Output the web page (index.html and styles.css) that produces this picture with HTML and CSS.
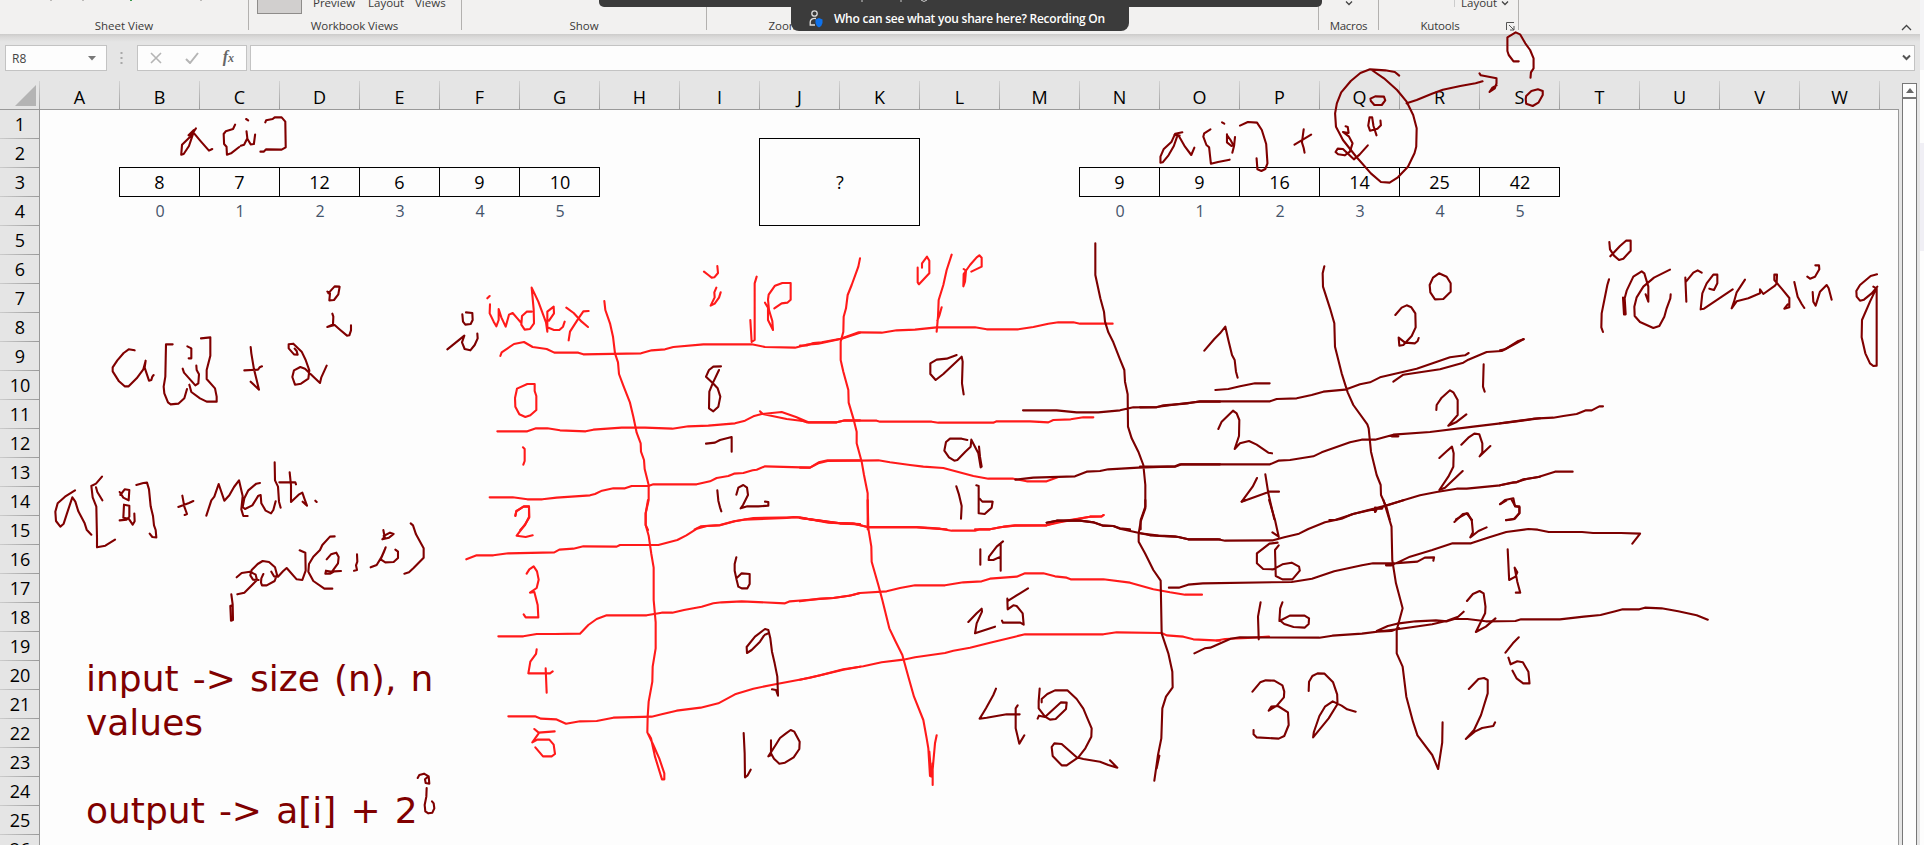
FILE: index.html
```
<!DOCTYPE html>
<html lang="en">
<head>
<meta charset="utf-8">
<title>Worksheet</title>
<link rel="stylesheet" href="styles.css">
</head>
<body>
<div class="app">
  <header class="ribbon">
    <section class="group g-sheet"><div class="tools"><i></i><i></i><i class="green"></i><i></i></div><span class="label">Sheet View</span></section>
    <section class="group g-views"><div class="tools"><b class="view-btn"></b><span class="w-preview">Preview</span><span class="w-layout">Layout</span><span>Views</span></div><span class="label">Workbook Views</span></section>
    <section class="group g-show"><span class="label">Show</span></section>
    <section class="group g-zoom"><span class="label">Zoom</span></section>
    <section class="group g-window"></section>
    <section class="group g-macros"><svg class="chev" width="8" height="5"><path d="M1 0.5 4 3.5 7 0.5"/></svg><span class="label">Macros</span></section>
    <section class="group g-kutools"><div class="tools"><span>Layout</span><svg class="chev" width="8" height="5"><path d="M1 0.5 4 3.5 7 0.5"/></svg></div><span class="label">Kutools</span>
      <svg class="launcher" width="9" height="9"><path d="M.5 8V.5H8M3 3 8 8M8 4V8H4"/></svg></section>
    <svg class="collapse" width="11" height="7"><path d="M1 6 5.500 1.500 10 6"/></svg>
  </header>

  <div class="formula">
    <div class="namebox"><span>R8</span><svg width="8" height="5"><path d="M0 0H8L4 4.500Z"/></svg></div>
    <svg class="dots" width="3" height="12"><path d="M.5 0h2v2h-2zM.5 5h2v2h-2zM.5 10h2v2h-2z"/></svg>
    <div class="buttons">
      <svg width="12" height="12"><path d="M1 1 11 11M11 1 1 11" stroke="#b5b5b5" stroke-width="1.6" fill="none"/></svg>
      <svg width="14" height="12"><path d="M1 7 5 11 13 1" stroke="#b5b5b5" stroke-width="2" fill="none"/></svg>
      <span class="fx">f<small>x</small></span>
    </div>
    <div class="input"><svg width="9" height="7"><path d="M1 1.500 4.500 5 8 1.500"/></svg></div>
  </div>

  <div class="sheet">
    <div class="head"><div class="corner"><svg width="21" height="21"><path d="M21 0V21H0Z"/></svg></div>
      <span>A</span><span>B</span><span>C</span><span>D</span><span>E</span><span>F</span><span>G</span><span>H</span><span>I</span><span>J</span><span>K</span><span>L</span><span>M</span><span>N</span><span>O</span><span>P</span><span>Q</span><span>R</span><span>S</span><span>T</span><span>U</span><span>V</span><span>W</span></div>
    <div class="body">
      <div class="rows"><span>1</span><span>2</span><span>3</span><span>4</span><span>5</span><span>6</span><span>7</span><span>8</span><span>9</span><span>10</span><span>11</span><span>12</span><span>13</span><span>14</span><span>15</span><span>16</span><span>17</span><span>18</span><span>19</span><span>20</span><span>21</span><span>22</span><span>23</span><span>24</span><span>25</span><span>26</span></div>
      <div class="cells">
        <div class="values in"><span>8</span><span>7</span><span>12</span><span>6</span><span>9</span><span>10</span></div>
        <div class="indexes in"><span>0</span><span>1</span><span>2</span><span>3</span><span>4</span><span>5</span></div>
        <div class="blackbox">?</div>
        <div class="values out"><span>9</span><span>9</span><span>16</span><span>14</span><span>25</span><span>42</span></div>
        <div class="indexes out"><span>0</span><span>1</span><span>2</span><span>3</span><span>4</span><span>5</span></div>
      </div>
    </div>
  </div>

  <div class="scroll"><div class="up"><svg width="8" height="5"><path d="M0 5 4 0 8 5Z"/></svg></div><div class="track"></div></div>
  <div class="edge"></div>

  <div class="share-top"><svg width="80" height="3"><path d="M1 0V2M40 0V2M60 0Q63 3 66 0"/></svg></div>
  <div class="share">
    <svg width="14" height="19" viewBox="0 0 14 19"><circle cx="5.500" cy="4.500" r="2.700"/><path d="M7 9.500C3.500 9 1.200 10.500 1.200 13v3H6"/><path class="shield" d="M10 9 13.500 10.500V14Q13 16.800 10 18.500Q7 16.800 6.500 14V10.500Z"/></svg>
    <span>Who can see what you share here? Recording On</span>
  </div>

  <div class="note"><p class="n1">input -&gt; size (n), n</p><p class="n2">values</p><p class="n3">output -&gt; a[i] + 2</p></div>

  <svg class="ink" width="1924" height="845">
    <!-- a[i] above the input array -->
    <g transform="scale(.40816 .33333)">
      <path d="M480 385 466 410 446 434 444 464 450 462 463 438 474 398 492 424 512 452 520 447M475 390 462 406M576 374 571 387 553 394 548 402 549 432 555 440 556 464 566 460 586 441M603 357 608 361M604 394 606 415 598 434 590 437M606 416 614 433 622 432 625 404M650 367 652 361 668 357 673 352 690 352 699 365 700 442 690 449 652 448 646 455 638 455"/>
    </g>
    <!-- a[i] above the output array -->
    <g transform="translate(560 0) scale(.446429 .33333)">
      <path d="M1394 397 1378 401 1370 425 1352 448 1345 470 1345 488 1350 487 1363 466 1375 438 1384 403 1400 440 1414 465 1421 443M1376 405 1388 407M1457 388 1443 400 1441 410 1448 435 1454 442 1458 491 1474 486 1500 479M1483 367 1488 371M1494 403 1494 427 1504 438 1508 435 1502 420 1494 405M1512 411 1510 437 1506 458"/>
    </g>
    <g transform="translate(1240 0) scale(.43622 .33333)">
      <path d="M0 377 18 366 39 368 50 390 60 432 63 490 58 507 49 513 40 508 38 475M146 388 142 427 146 444 148 458M125 434 163 404"/>
      <path d="M365 227 355 216 333 211 298 208 276 219 254 243 232 277 222 310 218 340 220 380 236 420 265 468 300 520 323 546 343 548 362 532 385 500 400 460 404 440 405 385 397 345 382 305 360 270 330 235 302 210"/>
      <path d="M299 296 310 289 330 290 333 301 325 315 308 315 300 303ZM242 379 247 381 249 399 236 396 250 410 258 430 252 455 240 466 225 463 219 456 224 446 236 447 261 478 274 464 293 436M322 362 323 376 315 386 298 392 294 377 297 352 303 352 306 378 313 406"/>
      <path d="M382 310 405 300 440 281 465 269 505 258 540 250 556 244M549 220 552 226 576 232 588 235 588 250 584 265 572 276 578 264 588 256M639 184 627 184 616 165 613 153 613 112 632 97 642 103 654 130 665 150 673 175 673 205 667 217 666 233"/>
      <path d="M656 288 668 273 683 268 694 273 694 285 684 308 671 318 656 311 655 297Z"/>
    </g>
    <!-- a[i] + 2^i and the Math.pow form -->
    <g transform="translate(0 240) scale(.33333)">
      <path d="M404 331 386 328 371 339 352 361 338 382 338 394 357 424 374 439 386 439 410 415 430 388 437 362 434 383 447 422 454 420 457 410 461 405M518 313 498 313 496 410 491 440 493 460 504 487 512 493 535 491 553 475 561 447M562 319 574 325 574 355 566 355M548 386 552 398 586 436 595 430 597 403 590 390 589 377M603 295 631 292 631 347 620 390 620 417 645 445 650 470 650 485 620 485 600 475 574 456 568 434"/>
      <path d="M752 321 754 340 762 388 770 420 777 449 752 425M733 391 774 389 779 382 786 379M884 326 890 333 893 344 882 343 866 325 866 313 880 311 905 335 917 360 928 391 925 416 903 431 885 434 877 411 882 391 901 381 915 386 960 429 964 412 980 377"/>
      <path d="M982 155 990 160 988 181 1002 180 1015 163 1019 140 1004 139 995 149 985 160M997 221 1000 230 999 253 982 261 1004 255 1020 269 1041 287 1048 286 1053 271 1053 256"/>
      <path d="M225 751 195 770 173 790 166 815 168 843 181 860 191 851 200 823 217 772 226 785 235 814 254 850 260 869 274 884M306 710 288 731 274 738 278 772 289 800 291 895 291 922 316 917 345 899M288 742 292 756 307 781M359 756 370 773 386 781 388 750 374 748 361 765M359 841 380 839 388 830 388 797 372 794 370 833 386 836 398 854 404 844 403 821M409 735 430 729 441 728 447 748 452 799 459 828 462 856 467 870 469 892 457 891 449 881"/>
      <path d="M547 767 553 800 561 822 554 825M535 801 567 789 580 783M619 827 634 781 643 770 656 732 673 782 688 766 702 741 717 721 728 768 724 808 730 828 743 828M780 729 769 731 745 751 733 775 728 801 735 807 757 796 775 767 782 765 784 790 797 812 813 820 820 810 827 784M824 667 825 721 834 740 837 785 842 803M838 727 886 727 888 733M869 697 873 736 873 786 896 764 907 758 914 778 921 797 908 785M946 782 950 786"/>
      <path d="M710 1012 725 999 750 995 767 1004 771 1020 757 1034 733 1058 712 1063M776 1020 759 1019 751 1006 755 990 773 972 788 963 807 966 825 982 831 1004 824 1023 800 1036 786 1036 783 1028 784 1015 790 1002M814 995 822 1009 834 1010 849 994 860 984 890 1018 907 1020 917 992 916 938 899 931M694 1063 698 1093 699 1140 693 1142 691 1098 698 1095M1004 889 990 890 967 915 960 930 940 950 927 972 925 995 940 1023 973 1046 997 1046"/>
      <path d="M980 958 993 943 1009 938 1016 951 1014 970 996 995 978 992 976 1001 991 1001 1003 994 1023 993M1071 943 1072 965 1068 976 1071 990 1062 992M1112 982 1130 975 1144 952 1157 922 1151 938 1142 958 1156 967 1181 966 1194 954 1194 935 1186 929M1150 870 1154 891 1147 898 1167 893 1181 882 1170 878 1151 888M1232 850 1239 856 1248 883 1271 925 1271 953 1240 985 1227 997 1213 1001"/>
    </g>
    <!-- working table, left columns -->
    <g class="red" transform="translate(440 240) scale(.33333)">
      <path d="M181 348 185 337 222 312 252 306 278 321 320 327 343 338 415 338 430 343 603 340 635 331 675 328 700 321 790 313 935 313 975 321 1065 323 1100 314 1135 311 1205 296 1260 278M172 574 262 574 288 565 322 565 360 571 437 574 460 569 545 563 615 563 697 566 745 559 805 557 885 550 915 542 940 529 965 522 1025 516 1068 531 1105 547 1190 547 1215 541 1260 541M960 514 968 522 1040 537 1095 544M149 772 218 772 262 778 307 778 350 773 450 766 465 762 486 752 520 745 555 745 575 738 625 738 640 733 770 733 810 724 830 714 865 708 882 701 910 699 938 691 950 689 975 679 1110 683 1136 667 1163 661 1260 661M764 868 782 859 840 855 882 844 940 834 1070 832 1110 838 1200 850 1260 853"/>
      <path d="M493 183 496 210 510 250 519 290 525 340 534 367 537 402 550 437 570 488 580 530 590 578 602 610 603 635 612 660 614 687 626 735 626 780 617 820 617 855 624 870"/>
      <path d="M142 175 149 168M150 193 149 220 161 245 169 259 176 240 176 207 184 232 197 260 207 224 218 219 232 235 244 249M275 215 260 215 246 228 244 254 254 269 270 267 282 250 281 208 275 143 295 185 318 247 322 275 322 215 341 200 342 220 327 242M322 262 342 270 358 270 369 260 374 245M379 203 401 219 425 245 444 261M446 213 430 214 415 236 390 275 386 301"/>
      <path d="M792 95 805 105 815 113 823 112 834 99 832 78M829 143 823 157 824 172 812 197 824 191 837 173 842 157M950 110 944 130 944 300 935 306 931 240M975 188 984 203 984 240 999 270 997 243 987 210 984 179 986 164 1005 137 1027 129 1052 129 1052 179 1042 188 1025 190 1003 205M284 432 262 432 231 446 225 474 226 500 238 523 256 531 271 526 289 510 289 468 284 453ZM249 622 254 627 254 663 250 674M226 828 229 813 252 799 267 799 267 831 255 855 241 870"/>
    </g>
    <g class="red" transform="translate(440 500) scale(.33333)">
      <path d="M226 47 229 34 250 20 267 20 268 52 254 75 230 107 257 111 278 106M79 178 110 166 160 166 205 160 343 157 358 149 400 146 430 139 530 140 540 135 655 135 712 120 739 106 771 86 800 78 840 76 885 64 912 59 1040 54 1060 51 1080 52 1120 60 1165 68 1260 72M260 221 268 208 281 199 291 214 296 239 290 264 270 278 283 276 293 315 295 352 257 352 251 343M175 409 250 409 290 402 345 402 420 401 445 375 470 357 500 346 620 346 665 338 697 338 732 330 785 320 820 310 845 307 905 304 1035 310 1050 304 1100 300 1180 294 1228 287 1260 279M290 448 288 462 271 485 265 520 330 520 338 514M317 505 320 578M205 649 285 649 303 656 348 658 378 671 420 664 470 663 520 653 635 650 665 643 710 632 782 623 835 610 885 583 940 566 1010 552 1110 533 1210 509 1260 500M283 687 296 698 344 694M296 700 277 727 292 719 328 719 341 734 345 762 335 769 309 769 286 742"/>
      <path d="M624 0 617 40 617 75 626 107 634 162 641 203 641 300 647 367 647 445 638 500 637 545 626 605 623 650 622 697 640 735 658 776 673 820 673 838 666 838 645 770 633 715 626 703"/>
    </g>
    <g class="red" transform="translate(800 240) scale(.33333)">
      <path d="M0 317 22 316 40 309 65 307 122 296 176 277 245 278 290 271 345 269 410 262 525 262 560 268 655 268 700 261 745 251 775 247 820 247 840 251 938 251M0 540 20 547 110 547 130 542 230 542 240 545 395 545 415 548 580 548 590 544 690 544 745 547 760 540 812 538 850 532 880 532M0 683 30 683 55 670 83 663 235 661 270 667 330 675 370 680 430 684 520 708 565 716 640 716 680 724 740 724 773 712M0 834 60 842 120 850 165 851 205 862 350 862 440 868M525 868 570 868 600 862 645 857 740 856 768 847 870 830 905 829 911 825"/>
      <path d="M180 55 175 80 155 135 143 165 138 205 131 230 130 275 122 305 122 360 130 395 145 450 146 488 160 535 170 575 170 610 185 665 192 705 203 760 203 868M366 83 366 70 381 50 388 62 388 100 357 133 353 127 353 83M455 44 440 90 430 135 416 180 414 230 410 275M425 202 418 227 412 242M491 87 498 92 495 125 490 139 491 102 510 75 530 52 538 46 545 53 545 80 514 95"/>
    </g>
    <g class="red" transform="translate(800 500) scale(.33333)">
      <path d="M0 54 60 62 100 69 160 71 203 81 350 81 420 86 455 92 525 92 540 88 570 88 610 80 645 76 740 76 780 67 870 50 905 49 911 45M0 304 60 296 100 294 155 286 180 279 260 274 300 264 345 256 435 256 490 247 545 244 570 236 650 230 675 220 730 220 765 229 800 233 812 238 910 238 990 248 1060 268 1110 277 1155 284 1206 284M0 539 60 526 130 508 190 499 245 487 310 479 345 472 435 459 460 452 510 443 570 428 645 410 675 403 910 403 950 397 1085 399 1100 406 1150 410 1180 418 1260 422"/>
      <path d="M203 0 205 85 214 140 215 185 235 255 247 300 268 385 286 423 307 465 325 530 342 590 370 660 380 715 385 745 390 828 396 830 405 730 410 706M398 790 398 855M388 755 394 827"/>
    </g>
    <path class="red" d="M1216.700 640.500 1225 639 1248 638 1269 636.500"/>
    <!-- handwritten table values -->
    <g class="dark" transform="translate(440 240) scale(.33333)">
      <path d="M67 223 69 245 76 254 92 252 98 240 97 219 78 217M22 328 73 287 66 307 74 327 91 331 104 315 113 295 112 281M843 379 820 380 807 390 798 410 818 429 833 445 841 470 835 500 820 514 807 505 808 455 818 430 837 390M798 611 825 608 840 600 875 591 875 635M832 751 835 782 840 802 844 814M889 764 895 743 910 735 921 743 924 765 909 795 902 805 922 799 955 799 985 797 985 786 975 785"/>
    </g>
    <g class="dark" transform="translate(440 500) scale(.33333)">
      <path d="M889 172 884 192 884 212 890 240 895 260 905 265 922 265 929 252 929 222 905 220 891 233M972 407 960 425 935 450 921 459 920 441 945 410 975 387 985 390 991 415 996 455 1004 490 1012 530 1014 587 1008 570 996 568M985 400 975 404M911 699 914 760 915 832 923 826 932 809M993 721 993 765 985 769 1007 735 1020 714 1037 701 1052 690 1063 695 1079 725 1078 747 1061 772 1035 788 1018 791 1002 776 992 758"/>
    </g>
    <g class="dark" transform="translate(800 240) scale(.33333)">
      <path d="M470 345 440 356 410 359 391 370 391 402 407 420 430 402 485 350 488 365 486 430 491 463M502 600 485 596 450 596 438 606 433 632 447 652 463 662 472 660 496 635 512 620 514 599 535 640 542 682M537 620 540 650 545 680M469 739 477 764 485 798 483 836M529 736 536 738 536 820 554 822 575 803 578 785 547 785 539 776"/>
      <path d="M886 10 886 105 901 175 912 215 915 245 925 277 940 307 960 358 973 390 975 425 983 463 984 560 995 595 1015 635 1030 675 1036 735 1036 800 1022 840 1022 868M669 511 770 511 830 517 895 517 960 511 1000 502 1070 501 1115 495 1155 490 1200 485 1260 485M646 719 700 713 825 709 860 695 900 693 925 688 1015 683 1125 679 1140 673 1260 673M740 848 770 842 840 842 880 847 910 857 940 858 960 865 990 868"/>
    </g>
    <g class="dark" transform="translate(800 500) scale(.33333)">
      <path d="M541 148 541 194M609 124 590 140 567 170 566 180 580 180 602 170M602 130 602 212M505 366 530 340 545 326 546 335 530 370 525 400 555 390 585 380M622 296 623 328 640 316 650 318 668 340 671 374 661 368 609 368 606 362M684 265 660 280 625 302M588 566 580 585 558 625 549 640 539 656 560 653 620 643 659 643M653 616 647 625 647 685 658 731 673 706M719 566 716 604 716 625 735 650 750 659 767 657 798 627 800 608 783 607 735 651 717 647 713 656M725 607 725 597 742 582 765 571 802 571 830 597 850 626 860 650 875 685 874 710 856 745 835 772 800 796 785 796 758 768 755 741 763 730 785 732 830 772 850 777 900 785 925 795 952 803 930 781"/>
      <path d="M740 68 770 62 840 62 880 67 910 77 940 78 960 86 1018 99 1050 106 1135 111 1165 118 1260 118M1036 0 1036 25 1022 65 1016 100 1016 125 1035 160 1060 210 1082 242 1085 400 1105 460 1117 515 1118 562 1098 590 1087 625 1084 715 1074 765 1063 842M1078 767 1070 805"/>
    </g>
    <g class="dark" transform="translate(1140 230) scale(.33333)">
      <path d="M193 362 223 327 240 310 256 290 265 330 276 375 284 390 288 425 293 443M226 480 265 477 300 469 345 460 389 460M235 597 245 575 279 542 290 550 298 570 297 618 284 657 300 640 327 633 350 644 385 668 396 670M351 744 338 770 305 815 388 785 417 785M376 733 385 790 403 868M766 255 785 233 800 226 814 232 826 250 827 292 815 318 790 345 778 347 776 323 795 338 825 340 833 333 836 324M897 130 879 143 869 165 871 187 885 208 910 207 932 185 932 160 920 140ZM1031 403 1029 470 1034 485M889 540 890 525 905 503 930 481 940 487 953 510 953 555 925 587 948 577 979 553M898 684 920 664 936 650 941 670 940 710 925 740 898 780 915 773 968 723M964 644 985 623 1003 611 1018 613 1027 640 1027 667 1019 679 1051 648"/>
      <path d="M0 532 50 532 70 526 145 520 180 514 390 514 410 507 470 505 515 495 550 485 615 479 660 463 690 457 720 442 830 416 930 382 975 376 986 369M760 455 790 434 900 418 970 398 985 389 1040 366 1085 363 1130 339 1151 327M0 710 105 710 125 703 390 703 415 692 450 690 520 679 545 667 630 637 665 629 705 629 760 614 870 606 1000 590 1100 578 1200 565M755 619 775 619M568 870 585 870 640 852 700 836 735 827 840 796 890 786 950 776 980 776 1080 766 1130 756 1160 747 1200 740M553 109 548 130 549 170 570 235 583 280 585 350 605 430 623 487 640 525 682 583 686 595 693 665 710 735 722 765 723 795 740 833 749 868M948 868 980 850 996 870M1080 823 1095 810 1120 805 1125 829 1138 829 1138 849 1125 866 1098 870M705 846 705 833 725 835"/>
    </g>
    <g class="dark" transform="translate(1140 500) scale(.369898 .33333)">
      <path d="M0 100 50 107 95 109 130 118 210 118 230 122 360 121 390 112 430 101 455 87 500 67 545 56 575 42 640 26 714 0M637 35 640 27 655 25M349 0 365 60 375 110 358 97M78 263 105 263 130 254 170 250 410 246 465 236 525 214 600 196 630 190 685 190 750 185 770 173 795 172 793 182M665 196 680 196 730 170 790 150 845 130 895 130 940 113 990 96 1050 87 1075 89 1105 96 1195 96 1225 99 1300 99 1352 101 1331 131M147 460 175 445 190 443 245 416 270 412 485 413 520 407 600 401 700 387 790 373 830 362 860 350 875 335M640 393 670 378 695 371 745 364 800 361 830 364 850 357 885 357 935 364 1015 363 1030 358 1135 358 1200 350 1245 345 1285 334 1305 328 1350 328 1365 323 1410 325 1455 334 1505 346 1535 359M640 395 680 393 700 384"/>
      <path d="M658 0 680 80 682 180 692 250 710 325 694 390 694 460 710 500 720 590 738 665 750 706 790 765 806 807 817 728 818 667M372 128 350 131 316 160 316 190 333 207 360 208 385 193 410 188 430 200 432 212 412 238 385 238 367 228 365 150 375 136M275 5 285 0M326 307 319 350 321 418M385 307 379 325 377 360 390 372 415 381 445 383 456 372 457 355 445 347 405 347 377 363M850 66 873 42 886 40 897 62 900 97 893 112 915 93 937 82M974 12 990 2M1005 0 1014 18 1026 22 1026 40 1010 58 990 61M994 148 998 240 1015 230 1020 217 1013 203M1013 204 1020 245 1028 278 1016 278M884 303 900 282 918 273 929 280 934 320 933 340 908 396 935 380 961 355M1024 412 1008 430 988 458M996 473 1002 493 1020 484 1035 487 1050 515 1053 550 1036 550 1018 535 1007 512M889 567 915 537 930 534 940 540 940 580 922 645 903 690 881 717 905 695 925 684 955 678 960 667"/>
      <path d="M304 575 325 547 340 541 363 542 385 556 390 575 389 592 370 617 348 632 355 620 373 618 400 637 402 675 390 708 375 716 315 712 307 703 307 690M456 573 457 545 466 528 480 520 499 521 522 547 533 583 534 612 510 655 468 712 470 696 485 648 500 620 521 604 545 617 560 628 583 635"/>
    </g>
    <g transform="translate(1500 220) scale(.33333)">
      <path d="M0 391 15 388 55 363 71 358M0 610 60 602 100 596 160 593 190 588 230 582 258 571 275 571 298 559 309 559M0 796 40 787 50 787 70 778 115 771 165 755 218 755"/>
      <path d="M328 66 330 88 342 107 357 120 370 116 392 92 392 62 378 62 360 78 331 109M327 178 322 195 313 240 305 280 304 322 309 336M369 233 372 283 377 283 374 235 380 212 400 170 425 154 433 160 445 200 445 245 437 223M510 149 462 173 430 200 410 232 403 260 404 288 420 306 460 324 478 318 493 290 500 265 511 235 512 223M556 173 559 245M558 185 580 158 593 151 605 158M628 206 642 210 652 190 652 164 640 164 620 190 607 220 602 268 612 266 698 208M735 179 710 217 702 245 695 265 710 244 745 235 780 220 780 208 790 222 825 197 830 190 831 164 823 164 823 180 845 206 868 234 868 262 853 266 863 253M883 186 893 230 905 252 913 264M946 136 957 136 958 148 945 170 930 176 922 170M938 216 940 245 947 257 960 215 980 195 986 205 995 239M1131 163 1112 168 1080 195 1069 213 1070 230 1080 242 1092 239 1115 220 1132 200M1120 200 1129 205 1110 245 1086 300 1085 352 1096 400 1110 430 1120 438 1130 437 1130 205"/>
    </g>
    <!-- exponent beside the typed note -->
    <g transform="translate(0 620) scale(.33333)"><path d="M1253 474 1258 465 1272 461 1286 469 1288 491 1277 489 1275 478 1283 471M1280 504 1279 530 1274 555 1276 574 1285 580 1297 578 1303 565 1301 550 1296 544"/></g>
  </svg>
</div>
</body>
</html>
```
FILE: styles.css
```
* { box-sizing: border-box; }
body { margin: 0; font-family: "Open Sans", "Noto Sans", sans-serif; color: #000; }
svg { display: block; flex: none; }
.app { position: relative; width: 1924px; height: 845px; overflow: hidden; background: #e5e5e5; }

.ribbon { position: relative; display: flex; width: 1920px; height: 34px; background: #f2f1f0; font-size: 11.500px; color: #3b3a39; overflow: hidden; }
.group { position: relative; display: flex; justify-content: center; align-items: flex-end; height: 30px; border-right: 1px solid #b3b1af; }
.label { line-height: 16px; margin-bottom: -4px; }
.g-sheet { width: 249px; }
.g-views { width: 213px; }
.g-views .label { margin-right: 1px; letter-spacing: -0.1px; }
.g-show { width: 245px; }
.g-zoom { width: 154px; border: 0; }
.g-window { width: 458px; }
.g-macros { width: 60px; }
.g-macros .label { letter-spacing: -0.3px; }
.g-kutools { width: 140px; }
.g-kutools .label { margin-right: 17px; letter-spacing: -0.2px; }
.tools { position: absolute; left: 0; top: 0; display: flex; line-height: 16px; }
.g-sheet .tools { gap: 30px; padding-left: 50px; }
.tools i { width: 2px; height: 1px; background: #bdbbb9; }
.tools .green { background: #3c9a50; margin-left: 16px; margin-right: 38px; }
.g-views .tools { padding-left: 8px; }
.g-views .tools span { margin-top: -5px; }
.view-btn { width: 45px; height: 14px; margin-right: 11px; background: #d1cfce; border: 1px solid #8e8c8a; border-top: 0; }
.w-preview { width: 55px; }
.w-layout { width: 47px; }
.chev path, .collapse path, .input path { fill: none; stroke: #444; stroke-width: 1.300; }
.g-macros .chev { position: absolute; left: 26px; top: 1px; }
.g-kutools .tools { left: 75px; padding-left: 6px; gap: 4px; height: 7px; border-left: 1px solid #ccc; }
.g-kutools .tools span { margin-top: -5px; }
.g-kutools .tools .chev { margin-top: 1px; }
.launcher { position: absolute; right: 3px; top: 22px; fill: none; stroke: #555; }
.collapse { position: absolute; left: 1901px; top: 24px; }

.formula { display: flex; align-items: center; width: 1920px; height: 47px; padding: 0 5px 0 5px; background: linear-gradient(#cccbca 0, #dad9d8 3px, #e5e5e5 8px); }
.namebox, .buttons, .input { height: 26px; background: #fdfdfd; border: 1px solid #c3c3c3; display: flex; align-items: center; }
.namebox { width: 102px; justify-content: space-between; padding: 2px 10px 0 6px; font-size: 12px; color: #444; }
.namebox path { fill: #777; }
.dots { margin: 0 14px 0 13px; }
.dots path { fill: #a8a8a8; }
.buttons { width: 110px; padding: 0 12px; justify-content: space-between; }
.fx { font: italic bold 16px/20px "Liberation Serif", serif; color: #666; }
.fx small { font-size: 12px; }
.input { width: 1665px; margin-left: 3px; justify-content: flex-end; padding-right: 3px; }
.input path { stroke: #555; stroke-width: 2; }

.sheet { width: 1899px; height: 764px; overflow: hidden; }
.head { display: flex; height: 29px; border-bottom: 1px solid #999; font-size: 18px; line-height: 32px; text-align: center; }
.head span, .corner { border-right: 1px solid; border-image: linear-gradient(#d4d4d4, #9b9b9b) 1; flex: none; }
.head span { width: 80px; height: 28px; }
.corner { width: 40px; padding: 4px 0 0 15px; }
.corner path { fill: #b4b4b4; }
.body { display: flex; height: 735px; background: #fdfdfd; border-right: 1px solid #999; }
.rows { width: 40px; flex: none; background: #e5e5e5; border-right: 1px solid #999; font-size: 18px; text-align: center; }
.rows span { display: block; height: 29px; line-height: 29px; padding-left: 1px; border-bottom: 1px solid; border-image: linear-gradient(90deg, #cdcdcd, #999) 1; }
.cells { display: grid; grid-template-columns: repeat(23, 80px); grid-auto-rows: 29px; font-size: 18px; }
.values, .indexes { display: grid; grid-template-columns: repeat(6, 80px); text-align: center; }
.values { grid-row: 3; margin: -1px 0 0 -1px; border: 1px solid #000; width: 481px; height: 30px; line-height: 28px; }
.values span { border-right: 1px solid #000; }
.values span:last-child { border: 0; }
.indexes { grid-row: 4; font-size: 16px; line-height: 29px; color: #44546a; }
.in { grid-column: 2 / 8; }
.out { grid-column: 14 / 20; }
.blackbox { grid-area: 2 / 10 / 5 / 12; margin: -1px 0 0 -1px; padding-left: 1px; border: 1px solid #000; display: flex; align-items: center; justify-content: center; }

.scroll { position: absolute; left: 1902px; top: 83px; width: 15px; height: 762px; display: flex; flex-direction: column; }
.up { height: 15px; display: flex; align-items: center; justify-content: center; background: #fdfdfd; border: 1px solid #777; }
.up path { fill: #666; }
.track { flex: 1; background: #fdfdfd; border: 1px solid #777; border-bottom: 0; }
.edge { position: absolute; left: 1920px; top: 0; width: 4px; height: 845px; background: linear-gradient(#f4f4f6 70px, #fdfdfd 70px, #fdfdfd 143px, #f0eff5 143px, #f0eff5 251px, #fdfdfd 251px); }

.share-top { position: absolute; left: 599px; top: 0; width: 723px; height: 7px; padding-left: 262px; background: #3b3b3b; border-radius: 0 0 5px 5px; }
.share-top path { fill: none; stroke: #ccc; }
.share { position: absolute; left: 791px; top: 6px; width: 338px; height: 25px; display: flex; align-items: center; gap: 11px; padding-left: 18px; background: #3b3b3b; border-radius: 0 0 8px 8px; color: #fff; font-size: 12px; font-weight: 600; letter-spacing: -0.240px; white-space: nowrap; }
.share svg { fill: none; stroke: #ddd; stroke-width: 1.300; }
.share .shield { fill: #0e72ed; stroke: none; }

.note { position: absolute; left: 86px; top: 657px; font: 36px/44px "DejaVu Sans", sans-serif; word-spacing: 2.700px; color: #800000; white-space: pre; }
.note p { margin: 0; }
.n3 { padding-top: 44px; }

.ink { position: absolute; left: 0; top: 0; fill: none; stroke: #800000; stroke-width: 2.100; stroke-linecap: round; stroke-linejoin: round; }
.ink path { vector-effect: non-scaling-stroke; }
.ink .red { stroke: #ff1a1a; }
.ink .dark { stroke: #7c0000; }
```
